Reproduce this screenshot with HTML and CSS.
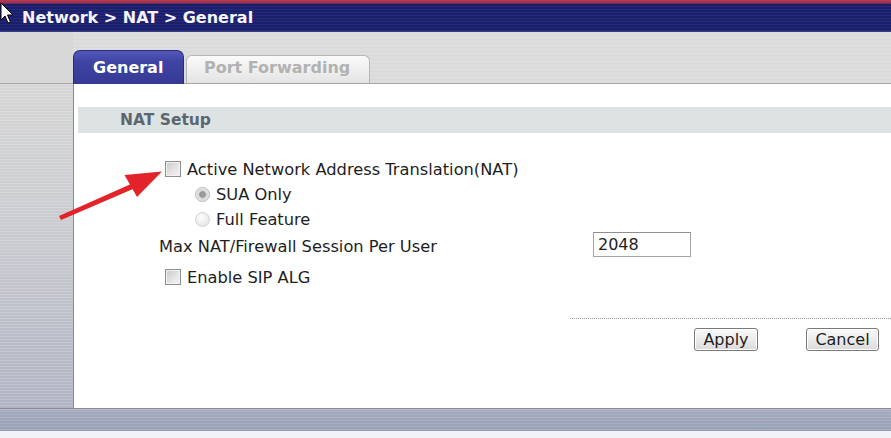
FILE: index.html
```html
<!DOCTYPE html>
<html>
<head>
<meta charset="utf-8">
<title>Network &gt; NAT &gt; General</title>
<link rel="stylesheet" href="styles.css">
</head>
<body>
<div class="topline"></div>
<div class="header"><span class="title">Network &gt; NAT &gt; General</span></div>
<div class="tabrow">
  <div class="tab tab-active">General</div>
  <div class="tab tab-inactive">Port Forwarding</div>
</div>
<div class="bodyrow">
  <div class="side"></div>
  <div class="panel">
    <div class="section-head">NAT Setup</div>
    <div class="form">
      <div class="row row-check row1">
        <input type="checkbox" class="cb">
        <span class="label">Active Network Address Translation(NAT)</span>
      </div>
      <div class="row row-radio row2">
        <span class="radio radio-on"></span>
        <span class="label">SUA Only</span>
      </div>
      <div class="row row-radio row3">
        <span class="radio"></span>
        <span class="label">Full Feature</span>
      </div>
      <div class="row row-field">
        <span class="label">Max NAT/Firewall Session Per User</span>
        <input type="text" class="field" value="2048">
      </div>
      <div class="row row-check row5">
        <input type="checkbox" class="cb">
        <span class="label">Enable SIP ALG</span>
      </div>
    </div>
    <div class="dotted"></div>
    <div class="buttons">
      <button class="btn btn-apply">Apply</button>
      <button class="btn btn-cancel">Cancel</button>
    </div>
  </div>
</div>
<div class="footer"></div>

<svg class="annot" width="891" height="438" viewBox="0 0 891 438">
  <path d="M59 216 L131 184 L133 189 L61 220 Z" fill="#e2242a"/>
  <polygon points="162,171.5 124.5,175 137,197" fill="#e2242a"/>
</svg>
<svg class="cursor" width="14" height="24" viewBox="0 0 14 24">
  <path d="M1 1 L1 18 L5 14 L8 21 L10.5 20 L7.5 13 L13 13 Z" fill="#fff" stroke="#000" stroke-width="1"/>
</svg>
</body>
</html>
```
FILE: styles.css
```css
html, body {
  margin: 0;
  padding: 0;
}
body {
  width: 891px;
  height: 438px;
  overflow: hidden;
  position: relative;
  background: #fff;
  font-family: "DejaVu Sans", Verdana, sans-serif;
  color: #1e1e1e;
}
.topline {
  height: 4px;
  background: linear-gradient(#b43a4e 0, #a8344c 2px, #5a2a62 4px);
}
.header {
  height: 28px;
  box-sizing: border-box;
  background: repeating-linear-gradient(#1b1f6a 0 2px, #252a7c 2px 3px);
  border-bottom: 1px solid #3a3e78;
  display: flex;
  align-items: center;
  padding-left: 22px;
}
.title {
  color: #f4f4fa;
  font-weight: bold;
  font-size: 16px;
}
.tabrow {
  height: 52px;
  box-sizing: border-box;
  display: flex;
  align-items: flex-end;
  padding-left: 73px;
  background:
    linear-gradient(to right, #d8d8d8 0 73px, transparent 73px),
    repeating-linear-gradient(#dddddd 0 3px, #d8d8d8 3px 4px);
  border-bottom: 1px solid #a6a6a6;
}
.tab {
  box-sizing: border-box;
  font-weight: bold;
  font-size: 16px;
  display: flex;
  align-items: center;
}
.tab-active {
  width: 111px;
  height: 34px;
  margin-bottom: -1px;
  padding-left: 19px;
  color: #fff;
  background: linear-gradient(#5358b8 0, #3e43a3 35%, #363a94 100%);
  border: 1px solid #2a2d7c;
  border-bottom: none;
  border-radius: 7px 7px 0 0;
}
.tab-inactive {
  width: 184px;
  height: 28px;
  margin-left: 2px;
  padding-left: 17px;
  padding-bottom: 5px;
  color: #b2b2b2;
  background: linear-gradient(#fafafa, #e4e4e4);
  border: 1px solid #b6b6b6;
  border-bottom: none;
  border-radius: 6px 6px 0 0;
}
.bodyrow {
  display: flex;
  height: 324px;
}
.side {
  width: 73px;
  border-right: 1px solid #8a8a8a;
  background:
    repeating-linear-gradient(rgba(255,255,255,0.18) 0 1px, rgba(0,0,0,0) 1px 3px),
    linear-gradient(#d6d6d6 0, #c8cacf 50%, #b0b4c3 100%);
}
.panel {
  flex: 1;
  background: #fff;
  display: flex;
  flex-direction: column;
}
.section-head {
  margin-top: 23px;
  margin-left: 4px;
  height: 26px;
  line-height: 26px;
  padding-left: 42px;
  background: #dde3e3;
  color: #5c6670;
  font-weight: bold;
  font-size: 15.5px;
}
.form {
  margin-top: 24px;
  display: flex;
  flex-direction: column;
}
.row {
  display: flex;
  align-items: center;
  font-size: 16.25px;
}
.row-check {
  padding-left: 91px;
  height: 24px;
}
.row2 { height: 26px; }
.row3 { height: 25px; }
.row5 { margin-top: 8px; }
.row-radio {
  padding-left: 121px;
}
.row-field {
  display: grid;
  grid-template-columns: 434px 98px;
  align-items: center;
  padding-left: 85px;
  height: 25px;
}
.row-field .label {
  padding-top: 3px;
}
.cb {
  appearance: none;
  -webkit-appearance: none;
  margin: 0 6px 0 0;
  width: 16px;
  height: 16px;
  box-sizing: border-box;
  border: 1px solid #8e8e8e;
  background: linear-gradient(135deg, #c8c8c8 0%, #e4e4e4 55%, #f4f4f4 100%);
  box-shadow: inset 0 0 0 1px #f2f2f2;
}
.radio {
  width: 15px;
  height: 15px;
  box-sizing: border-box;
  border-radius: 50%;
  margin-right: 6px;
  border: 1px solid #d2d2d2;
  background: radial-gradient(circle at 40% 35%, #fdfdfd 0, #ececec 60%, #dcdcdc 100%);
}
.radio-on {
  border-color: #b6b6b6;
  background: radial-gradient(circle, #9a9a9a 0 3px, #cfcfcf 3.5px, #e8e8e8 6px);
}
.field {
  width: 98px;
  height: 25px;
  box-sizing: border-box;
  margin: 0;
  padding: 0 0 0 4px;
  border: 1px solid #a4a4a4;
  border-top-color: #8e8e8e;
  font-family: "DejaVu Sans", Verdana, sans-serif;
  font-size: 16px;
  color: #1e1e1e;
  background: #fff;
}
.dotted {
  margin-top: 29px;
  margin-left: 496px;
  border-top: 1px dotted #9e9e9e;
}
.buttons {
  margin-top: 9px;
  padding-left: 620px;
  display: flex;
  gap: 48px;
}
.btn {
  height: 23px;
  box-sizing: border-box;
  margin: 0;
  padding: 0;
  font-family: "DejaVu Sans", Verdana, sans-serif;
  font-size: 16px;
  color: #1e1e1e;
  line-height: 19px;
  border: 1px solid #7a7a7a;
  border-radius: 3px;
  background: linear-gradient(#fbfbfb, #e8e8e8 60%, #dadada);
  box-shadow: inset 0 0 0 1px #fff;
}
.btn-apply { width: 64px; }
.btn-cancel { width: 73px; }
.footer {
  height: 30px;
  background:
    linear-gradient(#8a8a94 0 1px, #b9bdc8 1px 2px, transparent 2px),
    repeating-linear-gradient(rgba(255,255,255,0.12) 0 1px, rgba(0,0,0,0) 1px 3px),
    linear-gradient(#a6acbf 0, #98a0b6 23px, #f2f3f6 23px);
}
.annot {
  position: absolute;
  left: 0;
  top: 0;
  pointer-events: none;
}
.cursor {
  position: absolute;
  left: 0;
  top: 2px;
}
```
